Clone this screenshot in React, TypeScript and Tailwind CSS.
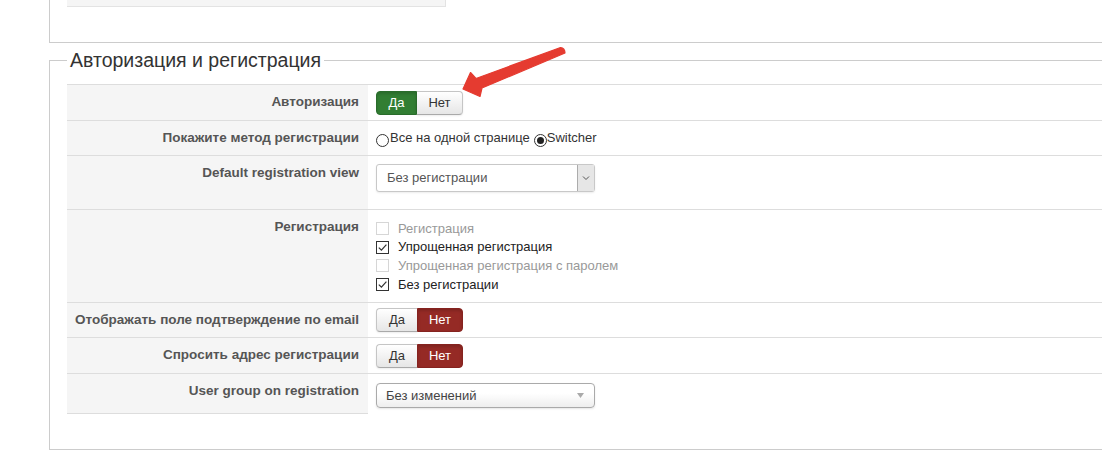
import React from 'react';

const fontStack = "font-['Liberation_Sans',Arial,sans-serif]";

function Toggle({ yes }: { yes: boolean }) {
  const idle =
    'bg-linear-to-b from-white to-[#e6e6e6] border border-[#c5c5c5] border-b-[#a9a9a9] text-[#333] shadow-[0_1px_2px_rgba(0,0,0,0.08)]';
  return (
    <div className="flex h-[24px] text-[13px]">
      <span
        className={
          'flex w-[41px] items-center justify-center rounded-l-[4px] ' +
          (yes
            ? 'bg-[#327e33] border border-[#2a6c2b] text-white shadow-[inset_0_2px_3px_rgba(0,0,0,0.15)]'
            : idle + ' border-r-0')
        }
      >
        Да
      </span>
      <span
        className={
          'flex w-[46px] items-center justify-center rounded-r-[4px] ' +
          (yes
            ? idle + ' border-l-0'
            : 'bg-[#952a25] border border-[#85231f] text-white shadow-[inset_0_2px_3px_rgba(0,0,0,0.15)]')
        }
      >
        Нет
      </span>
    </div>
  );
}

function Radio({ checked }: { checked?: boolean }) {
  return (
    <span className="mt-[5px] flex h-[13px] w-[13px] shrink-0 items-center justify-center rounded-full border border-[#333] bg-white">
      {checked && <span className="h-[7px] w-[7px] rounded-full bg-[#222]" />}
    </span>
  );
}

function Check({ checked, disabled, label }: { checked?: boolean; disabled?: boolean; label: string }) {
  return (
    <div className="flex h-[18.7px] items-center">
      <span
        className={
          'flex h-[13px] w-[13px] shrink-0 items-center justify-center border bg-white ' +
          (disabled ? 'border-[#d6d6d6]' : 'border-[#333]')
        }
      >
        {checked && (
          <svg width="11" height="11" viewBox="0 0 11 11">
            <path d="M1.8 5.6 L4.4 8.2 L9.4 2.6" fill="none" stroke="#333" strokeWidth="1.2" />
          </svg>
        )}
      </span>
      <span className={'ml-[9px] ' + (disabled ? 'text-[#999]' : 'text-[#222]')}>{label}</span>
    </div>
  );
}

function Row({
  label,
  height,
  last,
  children,
}: {
  label: string;
  height: string;
  last?: boolean;
  children: React.ReactNode;
}) {
  return (
    <div className={'flex border-t border-[#ddd] ' + height}>
      <div
        className={
          'w-[301px] shrink-0 bg-[#f5f5f5] pt-[8px] pr-[9px] text-right text-[13.5px] font-bold leading-[18px] text-[#555] ' +
          (last ? 'border-b border-[#ddd]' : '')
        }
      >
        {label}
      </div>
      <div className="flex-1 pl-[8px]">{children}</div>
    </div>
  );
}

export default function App() {
  return (
    <div className={'relative h-[475px] w-[1102px] overflow-hidden bg-white ' + fontStack}>
      {/* previous panel */}
      <div className="ml-[49px] h-[43px] border-b border-l border-[#ccc] pl-[17px]">
        <div className="h-[7px] w-[379px] border-r border-b border-[#e3e3e3] bg-[#f5f5f5]" />
      </div>

      <fieldset className="mt-[5px] ml-[49px] border border-r-0 border-[#ccc] pt-[12px] pb-[35px] pl-[17px]">
        <legend className="px-[3px] text-[19.5px] leading-[24px] text-[#333]">Авторизация и регистрация</legend>

        <Row label="Авторизация" height="h-[36px]">
          <div className="pt-[6px]">
            <Toggle yes />
          </div>
        </Row>

        <Row label="Покажите метод регистрации" height="h-[35px]">
          <div className="flex pt-[8px] text-[13px] leading-[18px] text-[#333]">
            <Radio />
            <span className="ml-[1px]">Все на одной странице</span>
            <span className="ml-[4px]" />
            <Radio checked />
            <span>Switcher</span>
          </div>
        </Row>

        <Row label="Default registration view" height="h-[54px]">
          <div className="pt-[8px]">
            <div className="flex h-[28px] w-[219px] items-stretch rounded-[3px] border border-[#c8c8c8] bg-white shadow-[0_1px_2px_rgba(0,0,0,0.08)]">
              <span className="flex flex-1 items-center pl-[10px] text-[13px] text-[#555]">Без регистрации</span>
              <span className="flex w-[17px] items-center justify-center border-l border-[#acacac] bg-[#e6e6e6]">
                <svg width="8" height="6" viewBox="0 0 8 6">
                  <path d="M1 1.5 L4 4.5 L7 1.5" fill="none" stroke="#555" strokeWidth="1" />
                </svg>
              </span>
            </div>
          </div>
        </Row>

        <Row label="Регистрация" height="h-[93px]">
          <div className="pt-[9px] text-[13px]">
            <Check disabled label="Регистрация" />
            <Check checked label="Упрощенная регистрация" />
            <Check disabled label="Упрощенная регистрация с паролем" />
            <Check checked label="Без регистрации" />
          </div>
        </Row>

        <Row label="Отображать поле подтверждение по email" height="h-[35px]">
          <div className="pt-[5px]">
            <Toggle yes={false} />
          </div>
        </Row>

        <Row label="Спросить адрес регистрации" height="h-[36px]">
          <div className="pt-[6px]">
            <Toggle yes={false} />
          </div>
        </Row>

        <Row label="User group on registration" height="h-[41px]" last>
          <div className="pt-[9px]">
            <div className="flex h-[25px] w-[219px] items-center justify-between rounded-[4px] border border-[#aaa] bg-linear-to-b from-white from-40% to-[#eee] pr-[10px] pl-[9px] shadow-[0_1px_2px_rgba(0,0,0,0.1)]">
              <span className="text-[13px] text-[#444]">Без изменений</span>
              <svg width="7" height="5" viewBox="0 0 7 5">
                <path d="M0 0 L7 0 L3.5 5 Z" fill="#aaa" />
              </svg>
            </div>
          </div>
        </Row>
      </fieldset>

      {/* annotation arrow */}
      <svg className="pointer-events-none absolute top-0 left-0" width="1102" height="475" viewBox="0 0 1102 475">
        <path
          d="M560.5 47.5 Q565 48 565 53 L482 88 L480 96.5 L463 89 L470.5 72.5 L476 78.5 Z"
          fill="#e53b30"
          stroke="#e53b30"
          strokeWidth="1.2"
          strokeLinejoin="round"
        />
      </svg>
    </div>
  );
}
